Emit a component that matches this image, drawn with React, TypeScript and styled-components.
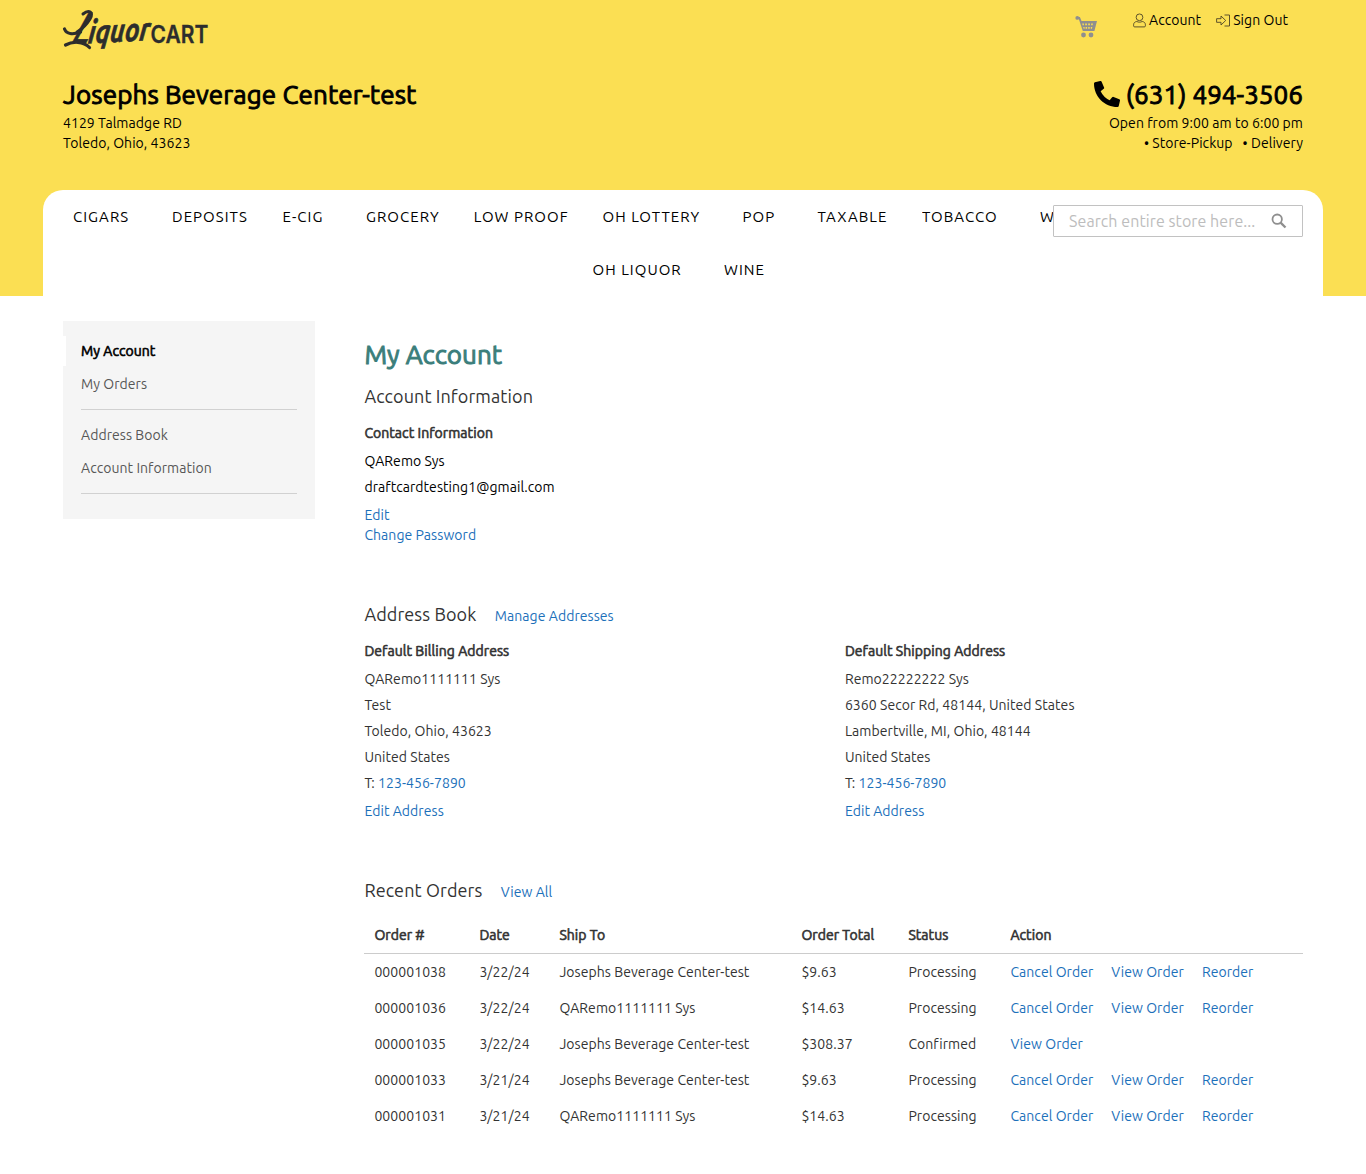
import React from 'react';
import styled, { createGlobalStyle, css } from 'styled-components';
import { FaPhoneAlt } from 'react-icons/fa';

const GlobalStyle = createGlobalStyle`
  * { box-sizing: border-box; }
  body {
    margin: 0;
    background: #fff;
    color: #333;
    font: 400 14px/20px Ubuntu, 'Noto Sans', sans-serif;
    letter-spacing: 0.06px;
  }
  a { color: #1c70ba; text-decoration: none; }
  ul { list-style: none; margin: 0; padding: 0; }
`;

const emphasis = css`
  font-weight: 400;
  -webkit-text-stroke: 0.6px currentColor;
`;

const Page = styled.div`
  min-height: 1174px;
`;

const Header = styled.header`
  background: #fbdf53;
  color: #000;
`;

const Container = styled.div`
  width: 1280px;
  margin: 0 auto;
  padding: 0 20px;
`;

const TopBar = styled(Container)`
  display: flex;
  justify-content: space-between;
  height: 80px;
  padding-right: 35px;
`;

const LogoMark = styled.svg`
  display: block;
  margin-top: 6px;
  overflow: visible;
`;

const TopLinks = styled.nav`
  display: flex;
  align-items: flex-start;
  padding-top: 10px;
`;

const CartLink = styled.a`
  display: block;
  width: 22px;
  height: 23px;
  margin: 6px 36px 0 0;
`;

const TopLink = styled.a`
  display: flex;
  align-items: center;
  gap: 3px;
  color: #000;
  & + & { margin-left: 15px; }
`;

const StoreRow = styled(Container)`
  display: flex;
  justify-content: space-between;
  height: 110px;
`;

const StoreBlock = styled.div<{ $right?: boolean }>`
  text-align: ${(p) => (p.$right ? 'right' : 'left')};
`;

const StoreHeading = styled.div`
  display: flex;
  align-items: center;
  height: 30px;
  margin-bottom: 3px;
  font-size: 26px;
  letter-spacing: 0.13px;
  -webkit-text-stroke: 0.95px currentColor;
`;

const PhoneHeading = styled(StoreHeading)`
  justify-content: flex-end;
  gap: 6px;
  letter-spacing: 0.05px;
  svg { stroke: none; margin-top: -2px; }
`;

const StoreLine = styled.div`
  height: 20px;
`;

const Services = styled.ul`
  display: flex;
  justify-content: flex-end;
  gap: 10px;
`;

const NavPanel = styled.div`
  position: relative;
  width: 1280px;
  height: 106px;
  margin: 0 auto;
  border-radius: 20px 20px 0 0;
  background: #fff;
`;

const NavRow = styled.ul<{ $indent: number }>`
  display: flex;
  height: 53px;
  padding-left: ${(p) => p.$indent}px;
`;

const NavItem = styled.li<{ $width: number }>`
  flex: 0 0 ${(p) => p.$width}px;
  line-height: 53px;
  font-size: 15px;
  letter-spacing: 1.04px;
  white-space: nowrap;
  overflow: hidden;
`;

const SearchForm = styled.form`
  position: absolute;
  top: 15px;
  right: 20px;
  display: flex;
  align-items: center;
  width: 250px;
  height: 32px;
  padding: 0 15px;
  border: 1px solid #c2c2c2;
  border-radius: 1px;
  background: #fff;
`;

const SearchInput = styled.input`
  flex: 1;
  min-width: 0;
  padding: 0;
  border: 0;
  outline: 0;
  background: none;
  font: 16px/22px Ubuntu, 'Noto Sans', sans-serif;
  letter-spacing: 0.08px;
  &::placeholder { color: #bdbdbd; opacity: 1; }
`;

const Columns = styled(Container)`
  display: flex;
  align-items: flex-start;
  gap: 49.4px;
  padding-top: 25px;
`;

const Sidebar = styled.aside`
  flex: 0 0 252px;
  padding: 15px 0;
  background: #f5f5f5;
`;

const SideItem = styled.li<{ $current?: boolean }>`
  height: 30px;
  padding: 5px 15px;
  border-left: 3px solid ${(p) => (p.$current ? '#fff' : 'transparent')};
  color: ${(p) => (p.$current ? '#000' : '#575757')};
  ${(p) => p.$current && emphasis}
  & + & { margin-top: 3px; }
`;

const SideDivider = styled.li`
  height: 1px;
  margin: 10px 18px;
  background: #d1d1d1;
`;

const Main = styled.main`
  flex: 1;
  min-width: 0;
  padding-top: 19px;
`;

const PageTitle = styled.h1`
  margin: 0 0 14px;
  color: #3b7e7b;
  font-size: 26px;
  font-weight: 400;
  line-height: 30px;
  letter-spacing: 0.06px;
  -webkit-text-stroke: 0.95px currentColor;
`;

const Section = styled.section`
  & + & { margin-top: 57px; }
`;

const SectionHead = styled.div`
  display: flex;
  align-items: baseline;
  gap: 18.4px;
  height: 24px;
  margin-bottom: 15px;
`;

const SectionTitle = styled.h2`
  margin: 0;
  font-size: 18px;
  font-weight: 400;
  line-height: 24px;
  letter-spacing: 0.1px;
`;

const BoxGrid = styled.div`
  display: grid;
  grid-template-columns: 1fr 1fr;
  column-gap: 22.4px;
`;

const BoxTitle = styled.h3`
  margin: 0 0 5px;
  font-size: 14px;
  line-height: 20px;
  ${emphasis}
`;

const BoxLines = styled.div<{ $strong?: boolean }>`
  margin-bottom: 5px;
  line-height: 26px;
  color: ${(p) => (p.$strong ? '#000' : '#333')};
`;

const BoxAction = styled.a`
  display: block;
`;

const OrdersTable = styled.table`
  width: 100%;
  table-layout: fixed;
  border-collapse: separate;
  border-spacing: 0;
`;

const Col = styled.col<{ $width?: number }>`
  width: ${(p) => (p.$width ? `${p.$width}px` : 'auto')};
`;

const HeadCell = styled.th`
  height: 37px;
  padding: 0 10px;
  border-bottom: 1px solid #ccc;
  text-align: left;
  ${emphasis}
`;

const Cell = styled.td`
  height: 36px;
  padding: 0 10px;
`;

const Actions = styled.div`
  display: flex;
  gap: 18px;
`;

function Logo() {
  return (
    <LogoMark width="146" height="52" viewBox="0 0 146 52" fill="#2d2d2d" role="img" aria-label="LiquorCart">
      <g fontFamily="Ubuntu, 'Noto Sans', sans-serif" fontWeight="700" fontStyle="italic" stroke="#2d2d2d">
        <text transform="translate(8 37) skewX(-20)" fontSize="44" fontWeight="500" strokeWidth="0.5" textLength="18" lengthAdjust="spacingAndGlyphs">L</text>
        <text transform="translate(24.5 37.5) rotate(-3) skewX(-8)" fontSize="32" strokeWidth="0.7" textLength="62" lengthAdjust="spacingAndGlyphs">iquor</text>
      </g>
      <g fill="none" stroke="#2d2d2d" strokeLinecap="round">
        <path d="M1.500 23c2 5 8 6 16 3" strokeWidth="3.200" />
        <path d="M2.500 39c7-4 18-4 24 2.500" strokeWidth="3.200" />
        <path d="M20 8c6-5 11-2 7 5-3 5-8 10-13 13" strokeWidth="3" />
      </g>
      <text x="87.500" y="36.500" fontFamily="Inter, sans-serif" fontWeight="600" fontSize="24.500" stroke="#2d2d2d" strokeWidth="0.300" textLength="58" lengthAdjust="spacingAndGlyphs">CART</text>
    </LogoMark>
  );
}

function CartIcon() {
  return (
    <svg width="22" height="23" viewBox="0 0 22 23" fill="#8f8f8f">
      <circle cx="2.300" cy="1.900" r="1.900" />
      <path d="M2 .9h2.900l1.600 4.200H22l-2.600 10H7.800L3.800 2.900H2z" />
      <g fill="#fbdf53">
        <path d="M7.200 7.400h1.700v1.800H7.600zM10.200 7.400h1.700v1.800h-1.700zM13.200 7.400h1.700v1.800h-1.700zM16.200 7.400h1.700l-.3 1.800h-1.400zM8.200 11h1.400v1.800h-.9zM10.600 11h1.500v1.800h-1.500zM13.200 11h1.500v1.800h-1.500zM15.800 11h1.500l-.4 1.800h-1.100z" />
      </g>
      <circle cx="8.500" cy="19" r="2.400" />
      <circle cx="16" cy="19" r="2.400" />
    </svg>
  );
}

function UserIcon() {
  return (
    <svg width="13" height="15" viewBox="0 0 13 15" fill="none" stroke="#4d4426" strokeWidth="0.900">
      <rect x="3.200" y="1" width="6.600" height="6.600" rx="3.100" />
      <path d="M3.800 8.500C1.700 8.800.6 10 .6 11.800v1c0 .7.4 1.100 1.100 1.100h9.600c.7 0 1.100-.4 1.100-1.100v-1c0-1.800-1.100-3-3.200-3.300-1.700.9-3.700.9-5.400 0z" />
    </svg>
  );
}

function SignOutIcon() {
  return (
    <svg width="14" height="13" viewBox="0 0 14 13" fill="none" stroke="#4d4426" strokeWidth="0.900">
      <path d="M.6 4.700h4.400V2l4.700 4.500L5 11V8.300H.6z" strokeLinejoin="round" />
      <path d="M8.500 1h5v11h-5" />
    </svg>
  );
}

function SearchIcon() {
  return (
    <svg width="16" height="16" viewBox="0 0 16 16" fill="none" stroke="#8f8f8f">
      <circle cx="6.200" cy="6.200" r="4.700" strokeWidth="1.800" />
      <path d="M9.600 9.600l4.900 4.900" strokeWidth="2.300" />
    </svg>
  );
}

const navRows = [
  {
    indent: 30,
    items: [
      ['CIGARS', 99], ['DEPOSITS', 110.5], ['E-CIG', 83.5], ['GROCERY', 107.7], ['LOW PROOF', 128.8],
      ['OH LOTTERY', 140], ['POP', 75], ['TAXABLE', 104.5], ['TOBACCO', 118], ['W', 40],
    ] as [string, number][],
  },
  { indent: 549.5, items: [['OH LIQUOR', 131.5], ['WINE', 60]] as [string, number][] },
];

const addresses = [
  {
    title: 'Default Billing Address',
    lines: ['QARemo1111111 Sys', 'Test', 'Toledo, Ohio, 43623', 'United States'],
  },
  {
    title: 'Default Shipping Address',
    lines: ['Remo22222222 Sys', '6360 Secor Rd, 48144, United States', 'Lambertville, MI, Ohio, 48144', 'United States'],
  },
];

const columns: [string, number?][] = [
  ['Order #', 105], ['Date', 80], ['Ship To', 242], ['Order Total', 107], ['Status', 102], ['Action'],
];

const full = ['Cancel Order', 'View Order', 'Reorder'];
const orders = [
  { cells: ['000001038', '3/22/24', 'Josephs Beverage Center-test', '$9.63', 'Processing'], actions: full },
  { cells: ['000001036', '3/22/24', 'QARemo1111111 Sys', '$14.63', 'Processing'], actions: full },
  { cells: ['000001035', '3/22/24', 'Josephs Beverage Center-test', '$308.37', 'Confirmed'], actions: ['View Order'] },
  { cells: ['000001033', '3/21/24', 'Josephs Beverage Center-test', '$9.63', 'Processing'], actions: full },
  { cells: ['000001031', '3/21/24', 'QARemo1111111 Sys', '$14.63', 'Processing'], actions: full },
];

export default function App() {
  return (
    <Page>
      <GlobalStyle />
      <Header>
        <TopBar>
          <Logo />
          <TopLinks>
            <CartLink href="#"><CartIcon /></CartLink>
            <TopLink href="#"><UserIcon />Account</TopLink>
            <TopLink href="#"><SignOutIcon />Sign Out</TopLink>
          </TopLinks>
        </TopBar>
        <StoreRow>
          <StoreBlock>
            <StoreHeading>Josephs Beverage Center-test</StoreHeading>
            <StoreLine>4129 Talmadge RD</StoreLine>
            <StoreLine>Toledo, Ohio, 43623</StoreLine>
          </StoreBlock>
          <StoreBlock $right>
            <PhoneHeading><FaPhoneAlt />(631) 494-3506</PhoneHeading>
            <StoreLine>Open from 9:00 am to 6:00 pm</StoreLine>
            <Services>
              <li>• Store-Pickup</li>
              <li>• Delivery</li>
            </Services>
          </StoreBlock>
        </StoreRow>
        <NavPanel>
          {navRows.map((row) => (
            <NavRow key={row.indent} $indent={row.indent}>
              {row.items.map(([label, width]) => (
                <NavItem key={label} $width={width}>{label}</NavItem>
              ))}
            </NavRow>
          ))}
          <SearchForm>
            <SearchInput placeholder="Search entire store here..." />
            <SearchIcon />
          </SearchForm>
        </NavPanel>
      </Header>
      <Columns>
        <Sidebar>
          <ul>
            <SideItem $current>My Account</SideItem>
            <SideItem>My Orders</SideItem>
            <SideDivider />
            <SideItem>Address Book</SideItem>
            <SideItem>Account Information</SideItem>
            <SideDivider />
          </ul>
        </Sidebar>
        <Main>
          <PageTitle>My Account</PageTitle>
          <Section>
            <SectionHead><SectionTitle>Account Information</SectionTitle></SectionHead>
            <BoxTitle>Contact Information</BoxTitle>
            <BoxLines $strong>
              <div>QARemo Sys</div>
              <div>draftcardtesting1@gmail.com</div>
            </BoxLines>
            <BoxAction href="#">Edit</BoxAction>
            <BoxAction href="#">Change Password</BoxAction>
          </Section>
          <Section>
            <SectionHead>
              <SectionTitle>Address Book</SectionTitle>
              <a href="#">Manage Addresses</a>
            </SectionHead>
            <BoxGrid>
              {addresses.map((address) => (
                <div key={address.title}>
                  <BoxTitle>{address.title}</BoxTitle>
                  <BoxLines>
                    {address.lines.map((line) => <div key={line}>{line}</div>)}
                    <div>T: <a href="#">123-456-7890</a></div>
                  </BoxLines>
                  <BoxAction href="#">Edit Address</BoxAction>
                </div>
              ))}
            </BoxGrid>
          </Section>
          <Section>
            <SectionHead>
              <SectionTitle>Recent Orders</SectionTitle>
              <a href="#">View All</a>
            </SectionHead>
            <OrdersTable>
              <colgroup>{columns.map(([name, width]) => <Col key={name} $width={width} />)}</colgroup>
              <thead>
                <tr>{columns.map(([name]) => <HeadCell key={name}>{name}</HeadCell>)}</tr>
              </thead>
              <tbody>
                {orders.map((order) => (
                  <tr key={order.cells[0]}>
                    {order.cells.map((value, i) => <Cell key={i}>{value}</Cell>)}
                    <Cell>
                      <Actions>{order.actions.map((a) => <a key={a} href="#">{a}</a>)}</Actions>
                    </Cell>
                  </tr>
                ))}
              </tbody>
            </OrdersTable>
          </Section>
        </Main>
      </Columns>
    </Page>
  );
}
